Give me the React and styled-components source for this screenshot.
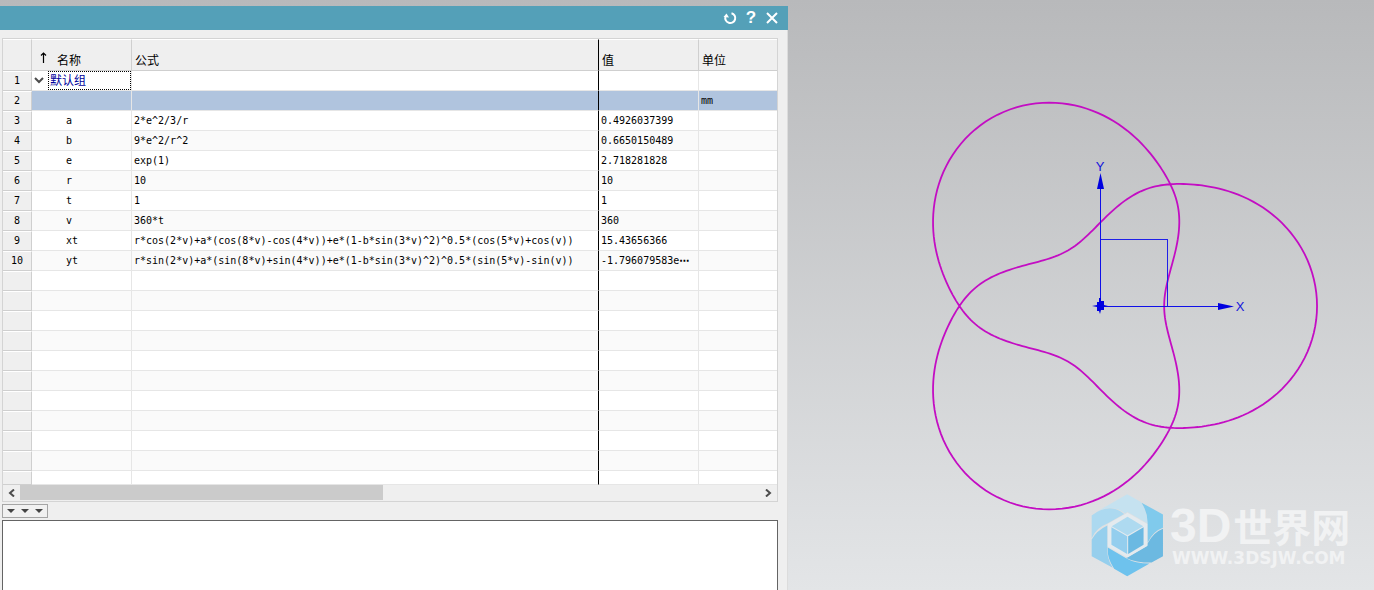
import React from 'react';
import styled, { createGlobalStyle } from 'styled-components';

const GlobalStyle = createGlobalStyle`
  * {
    box-sizing: border-box;
  }

  body {
    margin: 0;
    overflow: hidden;
    font-family: 'Liberation Sans', 'Noto Sans CJK SC', sans-serif;
    font-size: 12px;
    color: #000;
  }
`;

const Page = styled.main`
  display: grid;
  grid-template-columns: minmax(0, 788fr) minmax(0, 586fr);
  height: 100vh;
  background: linear-gradient(#b8b9bb, #e3e5e7);
`;

const Panel = styled.section`
  display: flex;
  flex-direction: column;
  margin-top: 6px;
  min-height: 0;
  background: #efefef;
  border-right: 1px solid #dcdcdc;
`;

const TitleBar = styled.header`
  display: flex;
  flex: none;
  justify-content: flex-end;
  align-items: center;
  gap: 3px;
  height: 24px;
  padding-right: 7px;
  margin-right: -1px;
  background: #54a0b8;
`;

const TitleButton = styled.button`
  display: flex;
  align-items: center;
  justify-content: center;
  width: 18px;
  height: 20px;
  padding: 0;
  border: 0;
  background: none;
  color: #fff;
  font: bold 17px 'Liberation Sans', sans-serif;
`;

const PanelBody = styled.div`
  display: flex;
  flex: 1;
  flex-direction: column;
  min-height: 0;
  padding: 8px 9px 0 2px;
`;

const GridFrame = styled.div`
  flex: none;
  border: 1px solid #d4d4d4;
`;

const Table = styled.table`
  width: 100%;
  table-layout: fixed;
  border-collapse: separate;
  border-spacing: 0;
  background: #fff;
`;

const Col = styled.col`
  width: ${props => props.$width};
`;

const HeadCell = styled.th`
  height: 32px;
  padding: 11px 3px 0 3px;
  overflow: hidden;
  background: #efefef;
  border-top: 1px solid #fff;
  border-right: 1px solid ${props => props.$line || '#cfcfcf'};
  border-bottom: 1px solid #cfcfcf;
  font-size: 12px;
  font-weight: normal;
  line-height: 18px;
  text-align: left;
  white-space: nowrap;

  &:last-child {
    border-right: 0;
  }
`;

const SortLabel = styled.span`
  display: flex;
  align-items: center;
  gap: 10px;
  padding-left: 4px;
`;

const SortArrow = styled.svg`
  margin-bottom: 6px;
`;

const Row = styled.tr`
  height: ${props => (props.$cut ? 14 : 20)}px;
  background: ${props => (props.$selected ? '#b0c4de' : '#fff')};

  &:nth-child(even) {
    background: ${props => (props.$selected ? '#b0c4de' : '#fafafa')};
  }
`;

const NumberCell = styled.th`
  padding: 0;
  background: #efefef;
  border-top: 1px solid #fff;
  border-right: 1px solid #cfcfcf;
  border-bottom: 1px solid #cfcfcf;
  font: 10px/14px 'DejaVu Sans Mono', monospace;
  text-align: center;
`;

const Cell = styled.td`
  padding: 0 0 0 ${props => props.$indent || 2}px;
  overflow: hidden;
  border-right: 1px solid ${props => props.$line || '#e6e6e6'};
  border-bottom: 1px solid #e6e6e6;
  font: 10px/14px 'DejaVu Sans Mono', monospace;
  white-space: nowrap;

  &:last-child {
    border-right: 0;
  }
`;

const Dots = styled.span`
  font-family: 'DejaVu Sans', sans-serif;
  font-weight: bold;
`;

const Group = styled.div`
  display: flex;
  align-items: center;
`;

const GroupToggle = styled.button`
  display: flex;
  align-items: center;
  flex: none;
  width: 14px;
  height: 18px;
  padding: 0;
  border: 0;
  background: none;
`;

const GroupName = styled.span`
  flex: 1;
  height: 19px;
  padding-left: 1px;
  border: 1px dotted #000;
  color: #00009c;
  font: 12px/15px 'Noto Sans CJK SC', sans-serif;
`;

const ScrollBar = styled.div`
  display: flex;
  height: 16px;
  padding-bottom: 1px;
  background: #efefef;
`;

const ScrollButton = styled.button`
  display: flex;
  align-items: center;
  justify-content: center;
  width: 17px;
  padding: 0;
  border: 0;
  background: none;
`;

const ScrollTrack = styled.div`
  flex: 1;
`;

const ScrollThumb = styled.div`
  width: 49%;
  height: 100%;
  background: #cbcbcb;
`;

const ExpandButton = styled.button`
  display: flex;
  flex: none;
  align-items: center;
  justify-content: space-between;
  width: 46px;
  height: 14px;
  margin: 2px 0;
  padding: 0 4px;
  border: 1px solid #a5a5a5;
  background: #f1f1f1;
`;

const Notes = styled.textarea`
  flex: 1;
  min-height: 70px;
  width: 100%;
  border: 1px solid #646464;
  border-bottom: 0;
  background: #fff;
  resize: none;
  outline: 0;
`;

const Viewport = styled.section`
  position: relative;
  min-width: 0;
`;

const Drawing = styled.svg`
  display: block;
  width: 100%;
  height: 100vh;
`;

const Watermark = styled.div`
  position: absolute;
  right: 22px;
  bottom: 13px;
  display: flex;
  align-items: center;
  gap: 6px;
`;

const WatermarkText = styled.div`
  display: flex;
  flex-direction: column;
  width: 182px;
  color: #f1f2f3;
  white-space: nowrap;
`;

const Brand = styled.div`
  display: flex;
  align-items: baseline;
  gap: 2px;
  font: bold 39px/44px 'Noto Sans CJK SC', sans-serif;
`;

const BrandLatin = styled.span`
  font: bold 48px/44px 'Liberation Sans', sans-serif;
`;

const Site = styled.div`
  padding-left: 2px;
  font: bold 17px/20px 'DejaVu Sans', sans-serif;
`;

const rows = [
  { name: 'a', formula: '2*e^2/3/r', value: '0.4926037399' },
  { name: 'b', formula: '9*e^2/r^2', value: '0.6650150489' },
  { name: 'e', formula: 'exp(1)', value: '2.718281828' },
  { name: 'r', formula: '10', value: '10' },
  { name: 't', formula: '1', value: '1' },
  { name: 'v', formula: '360*t', value: '360' },
  {
    name: 'xt',
    formula: 'r*cos(2*v)+a*(cos(8*v)-cos(4*v))+e*(1-b*sin(3*v)^2)^0.5*(cos(5*v)+cos(v))',
    value: '15.43656366'
  },
  {
    name: 'yt',
    formula: 'r*sin(2*v)+a*(sin(8*v)+sin(4*v))+e*(1-b*sin(3*v)^2)^0.5*(sin(5*v)-sin(v))',
    value: '-1.796079583e',
    cut: true
  }
];

const emptyRows = Array.from({ length: 11 }, (_, i) => i);

const { sin, cos, sqrt, PI, E } = Math;

// the xt / yt expressions from the table, as t runs from 0 to 1
function curvePoints(scale) {
  const r = 10;
  const a = (2 * E ** 2) / 3 / r;
  const b = (9 * E ** 2) / r ** 2;
  const points = [];
  for (let i = 0; i < 480; i++) {
    const v = (i / 480) * 2 * PI;
    const k = E * sqrt(1 - b * sin(3 * v) ** 2);
    const x = r * cos(2 * v) + a * (cos(8 * v) - cos(4 * v)) + k * (cos(5 * v) + cos(v));
    const y = r * sin(2 * v) + a * (sin(8 * v) + sin(4 * v)) + k * (sin(5 * v) - sin(v));
    points.push(`${(x * scale).toFixed(2)},${(-y * scale).toFixed(2)}`);
  }
  return points.join(' ');
}

const curve = curvePoints(14.06);

const Logo = () => (
  <svg width="73" height="83" viewBox="34 14 216 248" aria-hidden="true">
    <path fill="#c5e2f0" d="M50 67 141 15 182 38C203 70 202 100 202 102L142 68 135 72Q95 42 50 67Z" />
    <path fill="#80caec" d="M184 40 248 75V115Q218 125 202 160V102Q203 70 184 40Z" />
    <path fill="#6cb9e1" d="M248 118V200L214 219Q165 219 138 205L202 168V162Q220 128 248 118Z" />
    <path fill="#6ec2ed" d="M208 222 141 260 102 237Q80 205 83 174L138 206Q165 222 208 222Z" />
    <path fill="#96cfed" d="M98 234 35 200V150Q50 123 82 108V170Q78 205 98 234Z" />
    <path fill="#acd9f0" d="M35 146V78Q90 38 132 74L82 102Q48 115 35 146Z" />
    <path fill="#e4eaee" d="M142 70 201 104V169L142 204 83 171V104Z" />
    <path fill="#aedaf0" d="M142 82 189 110 142 137 95 110Z" />
    <path fill="#94ceee" d="M94 113 141 140V193L94 166Z" />
    <path fill="#6bb9e2" d="M144 140 190 113V166L144 193Z" />
  </svg>
);

const Chevron = ({ d, width, height }) => (
  <svg width={width} height={height} viewBox={`0 0 ${width} ${height}`}>
    <path d={d} fill="none" stroke="#4c4c4c" strokeWidth="2" />
  </svg>
);

const ExpressionTable = () => (
  <Table>
    <colgroup>
      <Col $width="29px" />
      <Col $width="100px" />
      <Col $width="auto" />
      <Col $width="100px" />
      <Col $width="78px" />
    </colgroup>
    <thead>
      <tr>
        <HeadCell />
        <HeadCell>
          <SortLabel>
            <SortArrow width="8" height="11" viewBox="0 0 8 11">
              <path d="M4.500 11V1M2 3.500 4.500 1 7 3.500" fill="none" stroke="#000" strokeWidth="1.200" />
            </SortArrow>
            名称
          </SortLabel>
        </HeadCell>
        <HeadCell $line="#000">公式</HeadCell>
        <HeadCell>值</HeadCell>
        <HeadCell>单位</HeadCell>
      </tr>
    </thead>
    <tbody>
      <Row>
        <NumberCell>1</NumberCell>
        <Cell>
          <Group>
            <GroupToggle aria-label="默认组">
              <Chevron width={10} height={7} d="M1 1 5 5 9 1" />
            </GroupToggle>
            <GroupName>默认组</GroupName>
          </Group>
        </Cell>
        <Cell $line="#000" />
        <Cell />
        <Cell />
      </Row>
      <Row $selected>
        <NumberCell>2</NumberCell>
        <Cell />
        <Cell $line="#000" />
        <Cell />
        <Cell>mm</Cell>
      </Row>
      {rows.map((row, i) => (
        <Row key={row.name}>
          <NumberCell>{i + 3}</NumberCell>
          <Cell $indent={34}>{row.name}</Cell>
          <Cell $line="#000">{row.formula}</Cell>
          <Cell>
            {row.value}
            {row.cut && <Dots>⋯</Dots>}
          </Cell>
          <Cell />
        </Row>
      ))}
      {emptyRows.map(i => (
        <Row key={i} $cut={i === emptyRows.length - 1}>
          <NumberCell />
          <Cell />
          <Cell $line="#000" />
          <Cell />
          <Cell />
        </Row>
      ))}
    </tbody>
  </Table>
);

const App = () => (
  <Page>
    <GlobalStyle />
    <Panel>
      <TitleBar>
        <TitleButton aria-label="重置">
          <svg width="14" height="14" viewBox="0 0 14 14" fill="none" stroke="#fff" strokeWidth="2">
            <path d="M8.500 2.200A5 5 0 1 1 2.500 5.500" />
            <path d="M0.500 6 3.500 2.500 6 6.500Z" fill="#fff" stroke="none" />
          </svg>
        </TitleButton>
        <TitleButton>?</TitleButton>
        <TitleButton aria-label="关闭">
          <svg width="12" height="12" viewBox="0 0 12 12" stroke="#fff" strokeWidth="2">
            <path d="M1 1 11 11M11 1 1 11" />
          </svg>
        </TitleButton>
      </TitleBar>
      <PanelBody>
        <GridFrame>
          <ExpressionTable />
          <ScrollBar>
            <ScrollButton aria-label="向左">
              <Chevron width={7} height={8} d="M6 0.500 2 4 6 7.500" />
            </ScrollButton>
            <ScrollTrack>
              <ScrollThumb />
            </ScrollTrack>
            <ScrollButton aria-label="向右">
              <Chevron width={7} height={8} d="M1 0.500 5 4 1 7.500" />
            </ScrollButton>
          </ScrollBar>
        </GridFrame>
        <ExpandButton aria-label="展开">
          {[0, 1, 2].map(i => (
            <svg key={i} width="8" height="4" viewBox="0 0 8 4">
              <path d="M0 0H8L4 4Z" fill="#444" />
            </svg>
          ))}
        </ExpandButton>
        <Notes aria-label="备注" />
      </PanelBody>
    </Panel>
    <Viewport>
      <Drawing viewBox="788 0 586 590">
        <g transform="translate(1100 306)">
          <polygon points={curve} fill="none" stroke="#c30dc3" strokeWidth="1.800" />
          <rect x="0.500" y="-66.500" width="67" height="67" fill="none" stroke="#2020e8" />
          <path d="M0.500 0V-120M0 0.500H120" fill="none" stroke="#1010e8" />
          <g fill="#0000e0">
            <path d="M0.500 -133 4 -117H-3ZM134 0.500 118 -3V4Z" />
            <path d="M-8 0 -3 -1V-4H-1V-8H1V-5H4V-1L8 0 4 1V4H1L0 8 -1 5H-3V1Z" />
          </g>
          <g fill="#1414dc" fontFamily="Liberation Sans, sans-serif" fontSize="13" textAnchor="middle">
            <text x="0" y="-135">Y</text>
            <text x="140" y="5">X</text>
          </g>
        </g>
      </Drawing>
      <Watermark>
        <Logo />
        <WatermarkText>
          <Brand>
            <BrandLatin>3D</BrandLatin>世界网
          </Brand>
          <Site>WWW.3DSJW.COM</Site>
        </WatermarkText>
      </Watermark>
    </Viewport>
  </Page>
);

export default App;
